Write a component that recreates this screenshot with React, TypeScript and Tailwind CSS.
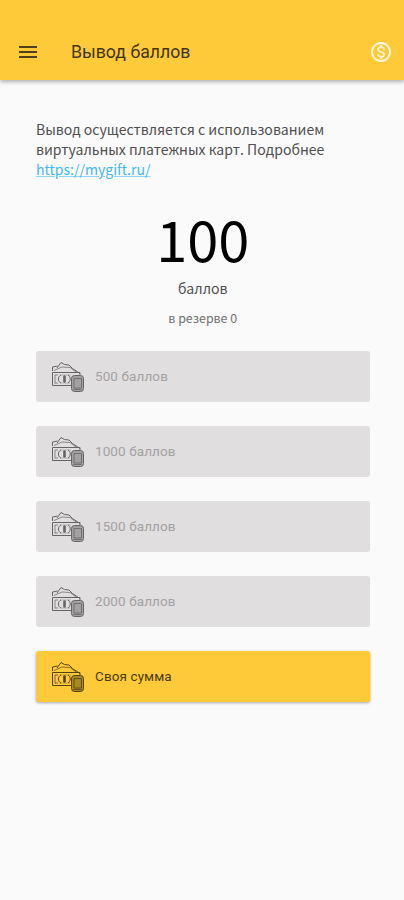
import { MdMenu, MdOutlineMonetizationOn } from "react-icons/md";

const amounts = [500, 1000, 1500, 2000];

function MoneyIcon() {
  return (
    <svg viewBox="0 0 34 32" className="h-8 w-[34px] shrink-0" fill="none" stroke="currentColor" strokeWidth="1">
      {/* fanned notes */}
      <path d="M1.5 10V6l5-1M6 7l4-5.500 3.500 2 4.500.5 3.500 3.500L29 12.500" />
      <path d="M3 9.500 11 6l8 .5 6 4.500" strokeOpacity="0.7" />
      {/* front note */}
      <path d="M20 24.500H1.500v-13H29v2.500" />
      <path d="M4 22.500v-8.500M4 14h3M4 22h3" strokeOpacity="0.7" />
      <path d="M10 14c-3.500 1.500-3.500 6.500 0 8M17 14c3 1.500 3 6.500 0 8" />
      <path d="M9 22h10M9 14h11" strokeOpacity="0.35" />
      <path d="M13.500 15.500v5" strokeWidth="2.600" strokeLinecap="round" />
      {/* coin stack */}
      <rect x="20.500" y="14.500" width="12" height="16" rx="3" fill="currentColor" fillOpacity="0.5" />
      <path d="M23 17.500h7.500v9.500H23zM22.500 28.500h8" strokeOpacity="0.8" />
    </svg>
  );
}

function AmountButton({ label, active = false }: { label: string; active?: boolean }) {
  const look = active
    ? "bg-[#ffca3a] text-[#4b3b12] shadow-[0_1px_3px_rgba(0,0,0,0.35)]"
    : "bg-[#e0dedf] text-[#a3a1a2]";
  return (
    <button className={`flex h-[51px] w-full items-center rounded-[3px] pl-[15px] ${look}`}>
      <span className={active ? "text-[#56430f]" : "text-[#666465]"}>
        <MoneyIcon />
      </span>
      <span className="ml-[10px] font-['Roboto',sans-serif] text-[13.5px] tracking-[0.1px]">{label}</span>
    </button>
  );
}

export default function App() {
  return (
    <div className="h-[900px] w-[404px] bg-[#fafafa] font-['Noto_Sans_CJK_SC','Noto_Sans',sans-serif] text-[#505050]">
      <header className="flex h-20 items-end bg-[#ffca3a] pr-[11px] pb-4 pl-4 shadow-[0_2px_4px_rgba(0,0,0,0.3)]">
        <MdMenu className="size-6 text-[#514013]" />
        <h1 className="ml-[31px] flex-1 font-['Roboto',sans-serif] text-[17.7px] leading-6 text-[#423510]">
          Вывод баллов
        </h1>
        <MdOutlineMonetizationOn className="size-6 text-[#fff8df]" />
      </header>

      <main className="pt-[39px] pr-[34.5px] pl-9">
        <p className="text-[14.05px] leading-5 whitespace-nowrap">
          Вывод осуществляется с использованием
          <br />
          виртуальных платежных карт. Подробнее
          <br />
          <a className="text-[#45b9f3] underline decoration-[#8fd3f6]" href="https://mygift.ru/">
            https://mygift.ru/
          </a>
        </p>

        <section className="flex flex-col items-center">
          <div className="mt-[29px] h-[68px] text-[56px] leading-[60px] text-black">100</div>
          <div className="mt-[2px] text-[14.1px] leading-5">баллов</div>
          <div className="mt-[10px] text-[12.4px] leading-5 text-[#707070]">в резерве 0</div>
        </section>

        <div className="mt-[23px] flex flex-col gap-6">
          {amounts.map((amount) => (
            <AmountButton key={amount} label={`${amount} баллов`} />
          ))}
          <AmountButton label="Своя сумма" active />
        </div>
      </main>
    </div>
  );
}
